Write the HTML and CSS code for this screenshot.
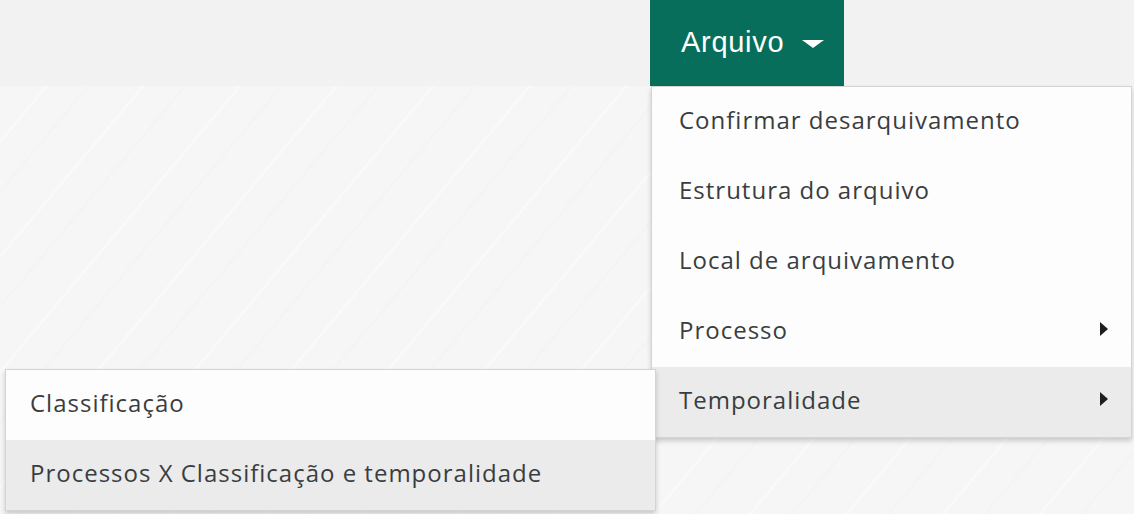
FILE: index.html
```html
<!DOCTYPE html>
<html lang="pt-BR">

<head>
  <meta charset="UTF-8">
  <meta name="viewport" content="width=device-width, initial-scale=1.0">
  <title>Arquivo</title>
  <link rel="stylesheet" href="styles.css">
</head>

<body>
  <header class="topbar">
    <nav class="menu">
      <div class="menu-item open">
        <button class="menu-btn">Arquivo<span class="caret"></span></button>

        <ul class="dropdown">
          <li><a href="#">Confirmar desarquivamento</a></li>
          <li><a href="#">Estrutura do arquivo</a></li>
          <li><a href="#">Local de arquivamento</a></li>
          <li class="has-sub"><a href="#">Processo <span class="arrow"></span></a></li>
          <li class="has-sub active">
            <a href="#">Temporalidade <span class="arrow"></span></a>
            <ul class="dropdown submenu">
              <li><a href="#">Classificação</a></li>
              <li class="active"><a href="#">Processos X Classificação e temporalidade</a></li>
            </ul>
          </li>
        </ul>
      </div>
    </nav>
  </header>

  <main class="content"></main>
</body>

</html>
```

FILE: styles.css
```css
:root {
  --green: #066e5a;
  --text: #3a3d40;
  --hover: #ebebeb;
}

* {
  box-sizing: border-box;
}

html, body {
  height: 100%;
}

body {
  margin: 0;
  font-family: "Open Sans", "Noto Sans", sans-serif;
  display: flex;
  flex-direction: column;
  background: #f6f6f6;
}

.topbar {
  height: 86px;
  background: #f2f2f2;
  padding-left: 650px;
  flex-shrink: 0;
}

.menu {
  display: flex;
  height: 100%;
}

.menu-item {
  position: relative;
}

.menu-btn {
  display: flex;
  align-items: center;
  height: 86px;
  width: 194px;
  border: 0;
  margin: 0;
  padding: 0 0 2px 31px;
  background: var(--green);
  color: #fff;
  font-family: "Liberation Sans", Arial, sans-serif;
  font-size: 29px;
  letter-spacing: 0.7px;
  cursor: pointer;
}

.caret {
  margin-left: 18px;
  margin-top: 3px;
  border-left: 11px solid transparent;
  border-right: 11px solid transparent;
  border-top: 8px solid #fff;
}

ul {
  list-style: none;
  margin: 0;
  padding: 0;
}

.dropdown {
  position: absolute;
  top: 86px;
  left: 1px;
  width: 481px;
  background: #fdfdfd;
  border: 1px solid #d4d4d4;
  box-shadow: 0 3px 5px rgba(0, 0, 0, 0.18);
}

.dropdown li {
  position: relative;
}

.dropdown a {
  display: flex;
  align-items: center;
  justify-content: space-between;
  height: 70px;
  padding: 0 23px 6px 27px;
  color: var(--text);
  text-decoration: none;
  font-size: 24px;
  letter-spacing: 1px;
}

.dropdown li.active > a {
  background: var(--hover);
}

.arrow {
  border-top: 7px solid transparent;
  border-bottom: 7px solid transparent;
  border-left: 8px solid #1e1e1e;
}

.submenu {
  top: 2px;
  left: auto;
  right: calc(100% - 4px);
  width: 651px;
}

.submenu a {
  padding-left: 24px;
}

.content {
  flex: 1;
  background-color: #f6f6f6;
  background-image: repeating-linear-gradient(
    -50deg,
    transparent 0,
    transparent 38px,
    rgba(0, 0, 0, 0.012) 40px,
    transparent 42px,
    transparent 70px,
    rgba(255, 255, 255, 0.5) 72px,
    transparent 74px
  );
}
```
